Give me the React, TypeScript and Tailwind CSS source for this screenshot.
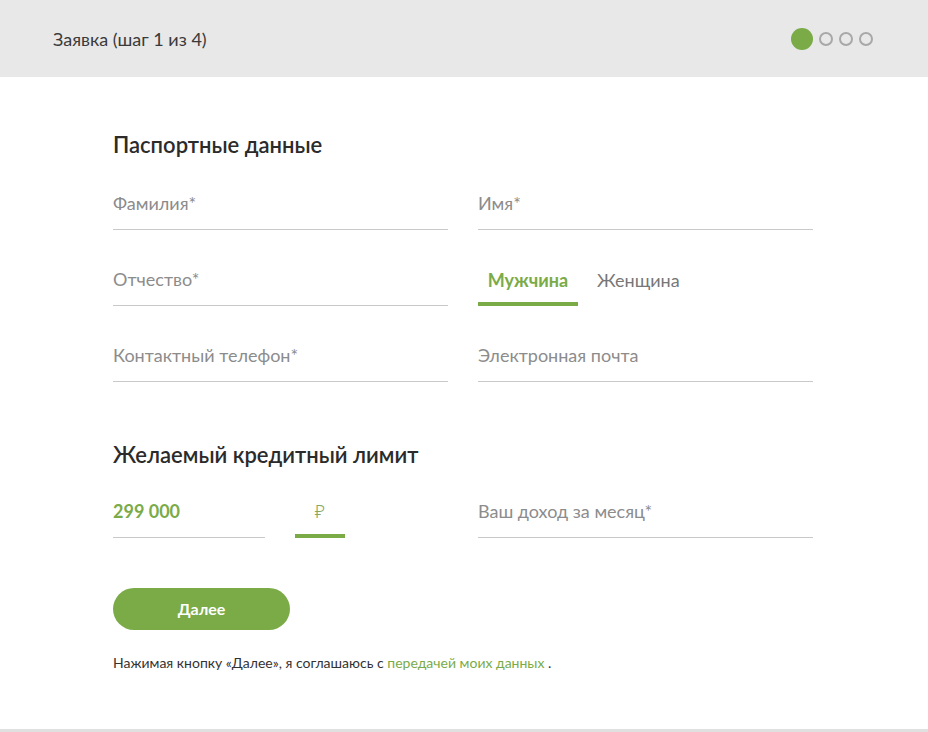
import React from "react";

function Field({ label }: { label: string }) {
  return (
    <div className="flex h-[48px] items-center border-b border-[#c9c9c9] pb-[4px]">
      <span className="text-[18px] text-[#8c8c8c]">{label}</span>
    </div>
  );
}

export default function App() {
  return (
    <div className="min-h-[732px] w-[928px] bg-[#ececec] font-['Lato','Noto_Sans',sans-serif]">
      <div className="flex h-[77px] items-center justify-between bg-[#e8e8e8] pl-[53px] pr-[55px]">
        <span className="text-[18px] leading-[24px] text-[#3a3a3a]">Заявка (шаг 1 из 4)</span>
        <div className="flex items-center gap-[6px]">
          <div className="h-[22px] w-[22px] rounded-full bg-[#7aab47]" />
          <div className="h-[14px] w-[14px] rounded-full border-2 border-[#a8a8a8]" />
          <div className="h-[14px] w-[14px] rounded-full border-2 border-[#a8a8a8]" />
          <div className="h-[14px] w-[14px] rounded-full border-2 border-[#a8a8a8]" />
        </div>
      </div>
      <div className="h-[652px] bg-white pl-[113px] pr-[115px] pt-[46px]">
        <h2 className="text-[22px] font-semibold leading-[44px] text-[#2b2b2b]">Паспортные данные</h2>
        <div className="mt-[15px] grid grid-cols-2 gap-x-[30px] gap-y-[28px]">
          <Field label="Фамилия*" />
          <Field label="Имя*" />
          <Field label="Отчество*" />
          <div className="flex h-[48px] items-stretch">
            <div className="flex w-[100px] items-center justify-center border-b-4 border-[#7aab47]">
              <span className="text-[18px] font-bold text-[#7aab47]">Мужчина</span>
            </div>
            <div className="flex items-center pb-[4px] pl-[19px]">
              <span className="text-[18px] text-[#777]">Женщина</span>
            </div>
          </div>
          <Field label="Контактный телефон*" />
          <Field label="Электронная почта" />
        </div>
        <h2 className="mt-[51px] text-[22px] font-semibold leading-[44px] text-[#2b2b2b]">Желаемый кредитный лимит</h2>
        <div className="mt-[13px] grid grid-cols-2 gap-x-[30px]">
          <div className="flex items-stretch">
            <div className="flex h-[48px] w-[152px] items-center border-b border-[#c9c9c9] pb-[4px]">
              <span className="text-[18px] font-bold text-[#7aab47]">299 000</span>
            </div>
            <div className="ml-[30px] flex w-[50px] items-center justify-center border-b-4 border-[#7aab47] pb-[1px]">
              <span className="text-[18px] font-light text-[#86a85e]">₽</span>
            </div>
          </div>
          <Field label="Ваш доход за месяц*" />
        </div>
        <button className="mt-[50px] flex h-[42px] w-[177px] items-center justify-center rounded-full bg-[#7aab47] text-[16px] font-bold text-white">
          Далее
        </button>
        <p className="mt-[23px] text-[14px] leading-[20px] text-[#333]">
          Нажимая кнопку «Далее», я соглашаюсь с <span className="text-[#7aab47]">передачей моих данных</span> .
        </p>
      </div>
      <div className="h-[3px] bg-[#e0e0e0]" />
    </div>
  );
}
